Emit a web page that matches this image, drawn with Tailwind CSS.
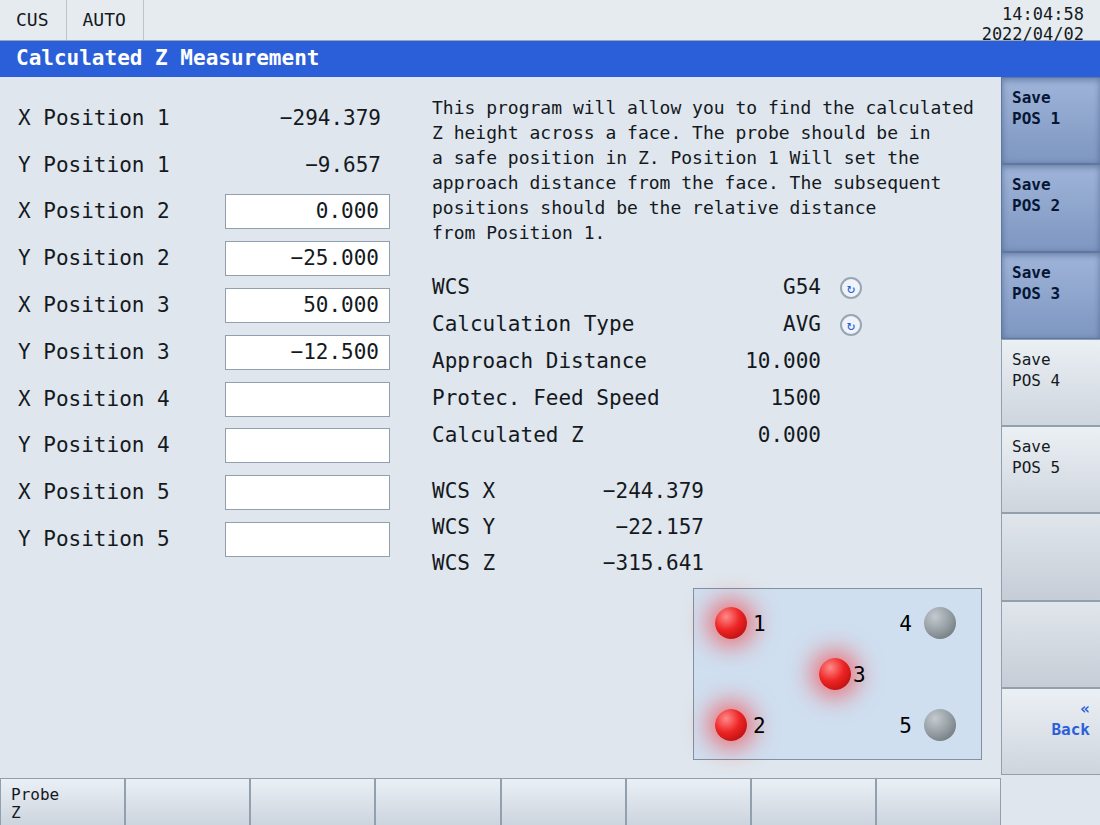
<!DOCTYPE html>
<html lang="en">
<head>
  <meta charset="UTF-8" />
  <meta name="viewport" content="width=device-width, initial-scale=1.0" />
  <title>Calculated Z Measurement</title>
  <script src="https://cdn.jsdelivr.net/npm/@tailwindcss/browser@4"></script>
</head>
<body class="flex min-h-screen flex-col bg-[#dfe6ed] font-['DejaVu_Sans_Mono',monospace] text-[#14191e]">

  <!-- Status bar -->
  <header class="flex h-[41px] items-stretch border-b border-[#98a5b4] bg-[#e6ebef] text-[18px] leading-5">
    <span class="flex items-center border-r border-[#bcc5ce] px-4 pr-[17px]">CUS</span>
    <span class="flex items-center border-r border-[#bcc5ce] px-4 pr-[17px]">AUTO</span>
    <div class="ml-auto pt-1 pr-4 text-right text-[17px]">
      <div>14:04:58</div>
      <div>2022/04/02</div>
    </div>
  </header>
  <h1 class="flex h-9 items-center bg-[#2b5fd9] px-4 text-[21px] font-bold text-white">Calculated Z Measurement</h1>

  <div class="flex flex-1">
    <div class="flex flex-1 flex-col">
      <main class="flex flex-1 gap-[42px] pt-[18px] pr-[19px] pl-[18px] text-[21px]">

        <!-- Positions -->
        <form class="grid h-[468px] w-[372px] shrink-0 grid-rows-10 leading-[35px]">
          <div class="flex items-center justify-between"><span>X Position 1</span><output class="pr-[9px]">−294.379</output></div>
          <div class="flex items-center justify-between"><span>Y Position 1</span><output class="pr-[9px]">−9.657</output></div>
          <div class="flex items-center justify-between"><label for="x2">X Position 2</label><input id="x2" type="text" value="0.000" class="h-[35px] w-[165px] border border-[#929fac] bg-white px-[10px] text-right" /></div>
          <div class="flex items-center justify-between"><label for="y2">Y Position 2</label><input id="y2" type="text" value="−25.000" class="h-[35px] w-[165px] border border-[#929fac] bg-white px-[10px] text-right" /></div>
          <div class="flex items-center justify-between"><label for="x3">X Position 3</label><input id="x3" type="text" value="50.000" class="h-[35px] w-[165px] border border-[#929fac] bg-white px-[10px] text-right" /></div>
          <div class="flex items-center justify-between"><label for="y3">Y Position 3</label><input id="y3" type="text" value="−12.500" class="h-[35px] w-[165px] border border-[#929fac] bg-white px-[10px] text-right" /></div>
          <div class="flex items-center justify-between"><label for="x4">X Position 4</label><input id="x4" type="text" class="h-[35px] w-[165px] border border-[#929fac] bg-white px-[10px] text-right" /></div>
          <div class="flex items-center justify-between"><label for="y4">Y Position 4</label><input id="y4" type="text" class="h-[35px] w-[165px] border border-[#929fac] bg-white px-[10px] text-right" /></div>
          <div class="flex items-center justify-between"><label for="x5">X Position 5</label><input id="x5" type="text" class="h-[35px] w-[165px] border border-[#929fac] bg-white px-[10px] text-right" /></div>
          <div class="flex items-center justify-between"><label for="y5">Y Position 5</label><input id="y5" type="text" class="h-[35px] w-[165px] border border-[#929fac] bg-white px-[10px] text-right" /></div>
        </form>

        <section class="flex flex-1 flex-col">
          <p class="text-[18px] leading-[25px] whitespace-nowrap">
            This program will allow you to find the calculated<br />
            Z height across a face. The probe should be in<br />
            a safe position in Z. Position 1 Will set the<br />
            approach distance from the face. The subsequent<br />
            positions should be the relative distance<br />
            from Position 1.
          </p>

          <dl class="mt-6 w-[430px] leading-[37px]">
            <div class="flex items-center">
              <dt class="flex-1">WCS</dt><dd>G54</dd>
              <dd class="flex w-[41px] justify-end"><button type="button" aria-label="Change WCS" class="flex size-[22px] items-center justify-center rounded-full border-2 border-[#98a5b4] bg-[#eff4fa] text-[14px] leading-none text-[#2b5fd9]">↻</button></dd>
            </div>
            <div class="flex items-center">
              <dt class="flex-1">Calculation Type</dt><dd>AVG</dd>
              <dd class="flex w-[41px] justify-end"><button type="button" aria-label="Change calculation type" class="flex size-[22px] items-center justify-center rounded-full border-2 border-[#98a5b4] bg-[#eff4fa] text-[14px] leading-none text-[#2b5fd9]">↻</button></dd>
            </div>
            <div class="flex pr-[41px]"><dt class="flex-1">Approach Distance</dt><dd>10.000</dd></div>
            <div class="flex pr-[41px]"><dt class="flex-1">Protec. Feed Speed</dt><dd>1500</dd></div>
            <div class="flex pr-[41px]"><dt class="flex-1">Calculated Z</dt><dd>0.000</dd></div>
          </dl>

          <dl class="mt-[19px] w-[272px] leading-9">
            <div class="flex justify-between"><dt>WCS X</dt><dd>−244.379</dd></div>
            <div class="flex justify-between"><dt>WCS Y</dt><dd>−22.157</dd></div>
            <div class="flex justify-between"><dt>WCS Z</dt><dd>−315.641</dd></div>
          </dl>

          <!-- Probe point map -->
          <div class="relative mt-[7px] h-[172px] w-[289px] self-end border border-[#82909f] bg-[#cfdff0] leading-[34px] text-black">
            <div class="absolute top-[18px] left-[21px] flex gap-[6px]">
              <span class="size-8 rounded-full bg-[radial-gradient(circle_at_35%_30%,#ff8a8a_0%,#ee2424_45%,#c41414_75%,#7d0808_100%)] shadow-[0_0_24px_7px_rgba(255,30,30,0.6)]"></span><span>1</span>
            </div>
            <div class="absolute top-[120px] left-[21px] flex gap-[6px]">
              <span class="size-8 rounded-full bg-[radial-gradient(circle_at_35%_30%,#ff8a8a_0%,#ee2424_45%,#c41414_75%,#7d0808_100%)] shadow-[0_0_24px_7px_rgba(255,30,30,0.6)]"></span><span>2</span>
            </div>
            <div class="absolute top-[69px] left-[125px] flex gap-[2px]">
              <span class="size-8 rounded-full bg-[radial-gradient(circle_at_35%_30%,#ff8a8a_0%,#ee2424_45%,#c41414_75%,#7d0808_100%)] shadow-[0_0_24px_7px_rgba(255,30,30,0.6)]"></span><span>3</span>
            </div>
            <div class="absolute top-[18px] right-[25px] flex gap-3">
              <span>4</span><span class="size-8 rounded-full bg-[radial-gradient(circle_at_35%_30%,#c3cbcf_0%,#949da2_50%,#5f686d_100%)]"></span>
            </div>
            <div class="absolute top-[120px] right-[25px] flex gap-3">
              <span>5</span><span class="size-8 rounded-full bg-[radial-gradient(circle_at_35%_30%,#c3cbcf_0%,#949da2_50%,#5f686d_100%)]"></span>
            </div>
          </div>
        </section>
      </main>

      <!-- Bottom softkeys -->
      <footer class="grid h-[47px] grid-cols-8 text-[16px] leading-[18px]">
        <button type="button" class="flex items-start border border-b-0 border-[#929fac] bg-linear-to-b from-[#eaf0f5] to-[#ccd4de] px-[10px] pt-[7px] text-left">Probe<br />Z</button>
        <button type="button" aria-label="Softkey 2" class="border border-b-0 border-[#929fac] bg-linear-to-b from-[#eaf0f5] to-[#ccd4de]"></button>
        <button type="button" aria-label="Softkey 3" class="border border-b-0 border-[#929fac] bg-linear-to-b from-[#eaf0f5] to-[#ccd4de]"></button>
        <button type="button" aria-label="Softkey 4" class="border border-b-0 border-[#929fac] bg-linear-to-b from-[#eaf0f5] to-[#ccd4de]"></button>
        <button type="button" aria-label="Softkey 5" class="border border-b-0 border-[#929fac] bg-linear-to-b from-[#eaf0f5] to-[#ccd4de]"></button>
        <button type="button" aria-label="Softkey 6" class="border border-b-0 border-[#929fac] bg-linear-to-b from-[#eaf0f5] to-[#ccd4de]"></button>
        <button type="button" aria-label="Softkey 7" class="border border-b-0 border-[#929fac] bg-linear-to-b from-[#eaf0f5] to-[#ccd4de]"></button>
        <button type="button" aria-label="Softkey 8" class="border border-b-0 border-[#929fac] bg-linear-to-b from-[#eaf0f5] to-[#ccd4de]"></button>
      </footer>
    </div>

    <!-- Side softkeys -->
    <nav class="grid w-[99px] shrink-0 grid-rows-8 pb-[50px] text-[16px] leading-[21px]">
      <button type="button" class="flex items-start border border-r-0 border-[#5f789f] bg-linear-to-b from-[#9fb4d9] to-[#7e97c1] px-[10px] pt-[9px] text-left font-bold text-[#071634] shadow-[inset_0_2px_6px_rgba(20,40,80,0.4)]">Save<br />POS 1</button>
      <button type="button" class="flex items-start border border-r-0 border-[#5f789f] bg-linear-to-b from-[#9fb4d9] to-[#7e97c1] px-[10px] pt-[9px] text-left font-bold text-[#071634] shadow-[inset_0_2px_6px_rgba(20,40,80,0.4)]">Save<br />POS 2</button>
      <button type="button" class="flex items-start border border-r-0 border-[#5f789f] bg-linear-to-b from-[#9fb4d9] to-[#7e97c1] px-[10px] pt-[9px] text-left font-bold text-[#071634] shadow-[inset_0_2px_6px_rgba(20,40,80,0.4)]">Save<br />POS 3</button>
      <button type="button" class="flex items-start border border-r-0 border-[#929fac] bg-linear-to-b from-[#ebf0f4] to-[#ced5dd] px-[10px] pt-[9px] text-left">Save<br />POS 4</button>
      <button type="button" class="flex items-start border border-r-0 border-[#929fac] bg-linear-to-b from-[#ebf0f4] to-[#ced5dd] px-[10px] pt-[9px] text-left">Save<br />POS 5</button>
      <button type="button" aria-label="Side key 6" class="border border-r-0 border-[#929fac] bg-linear-to-b from-[#e0e6eb] to-[#c6cdd7]"></button>
      <button type="button" aria-label="Side key 7" class="border border-r-0 border-[#929fac] bg-linear-to-b from-[#e0e6eb] to-[#c6cdd7]"></button>
      <button type="button" class="flex items-start justify-end border border-r-0 border-[#929fac] bg-linear-to-b from-[#ebf0f4] to-[#ced5dd] px-[10px] pt-[9px] text-right font-bold text-[#2b5fd9]">«<br />Back</button>
    </nav>
  </div>

</body>
</html>
